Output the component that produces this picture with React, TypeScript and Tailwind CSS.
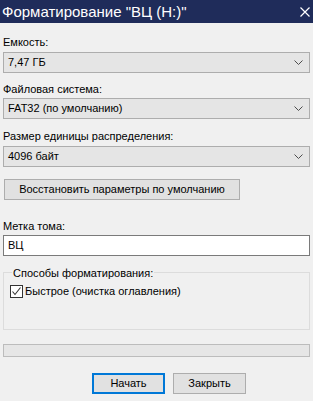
const Chevron = () => (
	<svg width="9" height="5" viewBox="0 0 9 5" className="text-[#4d4d4d]">
		<polyline points="0.5,0.5 4.5,4.5 8.5,0.5" fill="none" stroke="currentColor" strokeWidth="1" />
	</svg>
);

const Select = ({ value }: { value: string }) => (
	<div className="h-[21px] border border-[#adadad] bg-[#e5e5e5] flex items-center justify-between pl-[4px] pr-[6px] text-[#000]">
		<span>{value}</span>
		<Chevron />
	</div>
);

const Label = ({ text, className }: { text: string; className?: string }) => (
	<div className={'leading-[16px] h-[16px] ' + (className || '')}>{text}</div>
);

const App = () => {
	return (
		<div
			className="w-[313px] h-[401px] bg-[#f0f0f0] overflow-hidden flex flex-col text-[11px] text-black whitespace-nowrap"
			style={{ fontFamily: '"Segoe UI", "Liberation Sans", Arial, sans-serif' }}
		>
			<div className="h-[23px] bg-[#1f2c5a] flex items-center justify-between pl-[2px] pr-[3px] shrink-0">
				<span className="text-white text-[15px] leading-[20px]">
					Форматирование "ВЦ (H:)"
				</span>
				<svg width="10" height="10" viewBox="0 0 10 10">
					<path d="M0.5 0.5 L9.5 9.5 M9.5 0.5 L0.5 9.5" stroke="#fff" strokeWidth="1.2" />
				</svg>
			</div>
			<div className="px-[3px] flex flex-col">
				<Label text="Емкость:" className="mt-[11px]" />
				<div className="mt-[2px]">
					<Select value="7,47 ГБ" />
				</div>
				<Label text="Файловая система:" className="mt-[8px]" />
				<div className="mt-[1px]">
					<Select value="FAT32 (по умолчанию)" />
				</div>
				<Label text="Размер единицы распределения:" className="mt-[9px]" />
				<div className="mt-[2px]">
					<Select value="4096 байт" />
				</div>
				<button className="mt-[12px] ml-[1px] w-[236px] h-[21px] border border-[#adadad] bg-[#e1e1e1] text-center leading-[19px]">
					Восстановить параметры по умолчанию
				</button>
				<Label text="Метка тома:" className="mt-[18px]" />
				<div className="mt-[1px] h-[21px] border border-[#7a7a7a] bg-white flex items-center pl-[4px]">
					ВЦ
				</div>
				<div className="mt-[16px] h-[58px] border border-[#dcdcdc] flex flex-col">
					<div className="-mt-[6px] ml-[8px] self-start bg-[#f0f0f0] px-[1px] leading-[12px] h-[12px]">
						Способы форматирования:
					</div>
					<div className="mt-[4px] ml-[6px] flex items-center">
						<div className="w-[13px] h-[13px] border border-[#333] bg-white flex items-center justify-center">
							<svg width="11" height="11" viewBox="0 0 11 11">
								<polyline points="1.5,5.5 4,8.5 9.5,1.5" fill="none" stroke="#333" strokeWidth="1.1" />
							</svg>
						</div>
						<span className="ml-[2px] leading-[16px]">Быстрое (очистка оглавления)</span>
					</div>
				</div>
				<div className="mt-[14px] h-[13px] border border-[#bcbcbc] bg-[#e6e6e6]" />
				<div className="mt-[16px] flex ml-[89px] gap-[8px]">
					<button className="w-[73px] h-[21px] border-2 border-[#0078d7] bg-[#e1e1e1] leading-[17px]">
						Начать
					</button>
					<button className="w-[73px] h-[21px] border border-[#adadad] bg-[#e1e1e1] leading-[19px]">
						Закрыть
					</button>
				</div>
			</div>
		</div>
	);
};

export default App;
